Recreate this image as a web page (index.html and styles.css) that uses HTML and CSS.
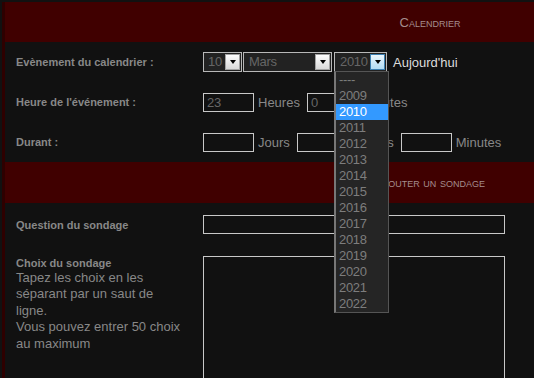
FILE: index.html
```html
<!DOCTYPE html>
<html lang="fr">
<head>
    <meta charset="UTF-8">
    <meta name="viewport" content="width=device-width, initial-scale=1.0">
    <title>Calendrier</title>
    <link rel="stylesheet" href="styles.css">
</head>
<body>
    <div class="forum">
        <div class="cat">Calendrier</div>

        <div class="row">
            <div class="lbl">Evènement du calendrier :</div>
            <div class="fld">
                <div class="sel day"><span>10</span><i class="btn"></i></div>
                <div class="sel month"><span>Mars</span><i class="btn"></i></div>
                <div class="sel year"><span>2010</span><i class="btn hot"></i>
                    <ul class="drop">
                        <li>----</li>
                        <li>2009</li>
                        <li class="cur">2010</li>
                        <li>2011</li>
                        <li>2012</li>
                        <li>2013</li>
                        <li>2014</li>
                        <li>2015</li>
                        <li>2016</li>
                        <li>2017</li>
                        <li>2018</li>
                        <li>2019</li>
                        <li>2020</li>
                        <li>2021</li>
                        <li>2022</li>
                    </ul>
                </div>
                <span class="today">Aujourd'hui</span>
            </div>
        </div>

        <div class="row">
            <div class="lbl">Heure de l'événement :</div>
            <div class="fld">
                <input class="txt" type="text" value="23"><span class="unit">Heures</span>
                <input class="txt" type="text" value="0"><span class="unit">Minutes</span>
            </div>
        </div>

        <div class="row">
            <div class="lbl">Durant :</div>
            <div class="fld">
                <input class="txt" type="text"><span class="unit">Jours</span>
                <input class="txt" type="text"><span class="unit">Heures</span>
                <input class="txt" type="text"><span class="unit">Minutes</span>
            </div>
        </div>

        <div class="cat cat2">Ajouter un sondage</div>

        <div class="row q">
            <div class="lbl">Question du sondage</div>
            <div class="fld">
                <input class="txt long" type="text">
            </div>
        </div>

        <div class="row choix">
            <div class="lbl">
                Choix du sondage
                <p class="aide">Tapez les choix en les séparant par un saut de ligne.<br>Vous pouvez entrer 50 choix au maximum</p>
            </div>
            <div class="fld">
                <textarea class="zone"></textarea>
            </div>
        </div>
    </div>
</body>
</html>
```

FILE: styles.css
```css
html {
    overflow: hidden;
    background-color: #111111;
}
body {
    margin: 0;
    background-color: #111111;
    font-family: "Liberation Sans", Arial, sans-serif;
}
.forum {
    width: 850px;
    margin: 2px 0 0 2px;
    border-left: 3px solid #2e0000;
}
.cat {
    height: 40px;
    background-color: #400000;
    color: #a48c8c;
    font-family: "Liberation Sans", Arial, sans-serif;
    font-size: 13px;
    font-variant: small-caps;
    display: flex;
    align-items: center;
    justify-content: center;
}
.cat2 {
    height: 41px;
}
.row {
    display: grid;
    grid-template-columns: 198px 1fr;
    align-items: center;
    height: 40px;
}
.lbl {
    padding: 0 19px 0 11px;
    font-size: 11px;
    font-weight: bold;
    color: #888888;
    line-height: 14px;
}
.fld {
    display: flex;
    align-items: center;
}

/* listes deroulantes */
.sel {
    position: relative;
    display: flex;
    box-sizing: border-box;
    height: 20px;
    border: 1px solid #b8b8b8;
    background-color: #222222;
    color: #666666;
    font-size: 13px;
    letter-spacing: -0.3px;
}
.sel span {
    flex: 1;
    padding-left: 5px;
    line-height: 18px;
}
.day {
    width: 39px;
}
.day span {
    padding-left: 4px;
}
.month {
    width: 89px;
    margin-left: 1px;
}
.year {
    width: 53px;
    margin-left: 2px;
}
.btn {
    width: 15px;
    margin: 1px;
    box-sizing: border-box;
    border: 1px solid #a2a2a2;
    background: linear-gradient(#fdfdfd, #d8d8d8);
    display: flex;
    align-items: center;
    justify-content: center;
}
.btn::after {
    content: "";
    border-left: 3px solid transparent;
    border-right: 3px solid transparent;
    border-top: 4px solid #000000;
}
.btn.hot {
    border-color: #3c7fb1;
    background: linear-gradient(#eaf6fd, #b2dcf4);
}
.drop {
    position: absolute;
    top: 100%;
    left: -1px;
    z-index: 5;
    width: 55px;
    box-sizing: border-box;
    margin: 0;
    padding: 0;
    list-style: none;
    background-color: #252525;
    border: 1px solid #555555;
    border-left: 2px solid #777777;
}
.drop li {
    height: 16px;
    line-height: 16px;
    padding-left: 3px;
    color: #7d7d7d;
}
.drop li.cur {
    background-color: #3399ff;
    color: white;
}
.today {
    margin-left: 6px;
    font-size: 13px;
    color: #dddddd;
}

/* champs texte */
.txt {
    box-sizing: border-box;
    width: 51px;
    height: 19px;
    margin: 0;
    padding: 0 3px;
    border: 1px solid #c8c8c8;
    background-color: #111111;
    color: #666666;
    font-family: "Liberation Sans", Arial, sans-serif;
    font-size: 13px;
    letter-spacing: -0.3px;
}
.unit {
    margin: 0 7px 0 4px;
    font-size: 13px;
    color: #888888;
}
.txt.long {
    width: 302px;
}
.row.q {
    height: auto;
    padding: 12px 0 11px;
}
.row.choix {
    height: auto;
    align-items: start;
    padding-top: 11px;
}
.aide {
    margin: 0;
    font-size: 13px;
    font-weight: normal;
    line-height: 16.4px;
}
.zone {
    box-sizing: border-box;
    width: 302px;
    height: 150px;
    margin: 0;
    border: 1px solid #c8c8c8;
    background-color: #111111;
    resize: none;
}
```
